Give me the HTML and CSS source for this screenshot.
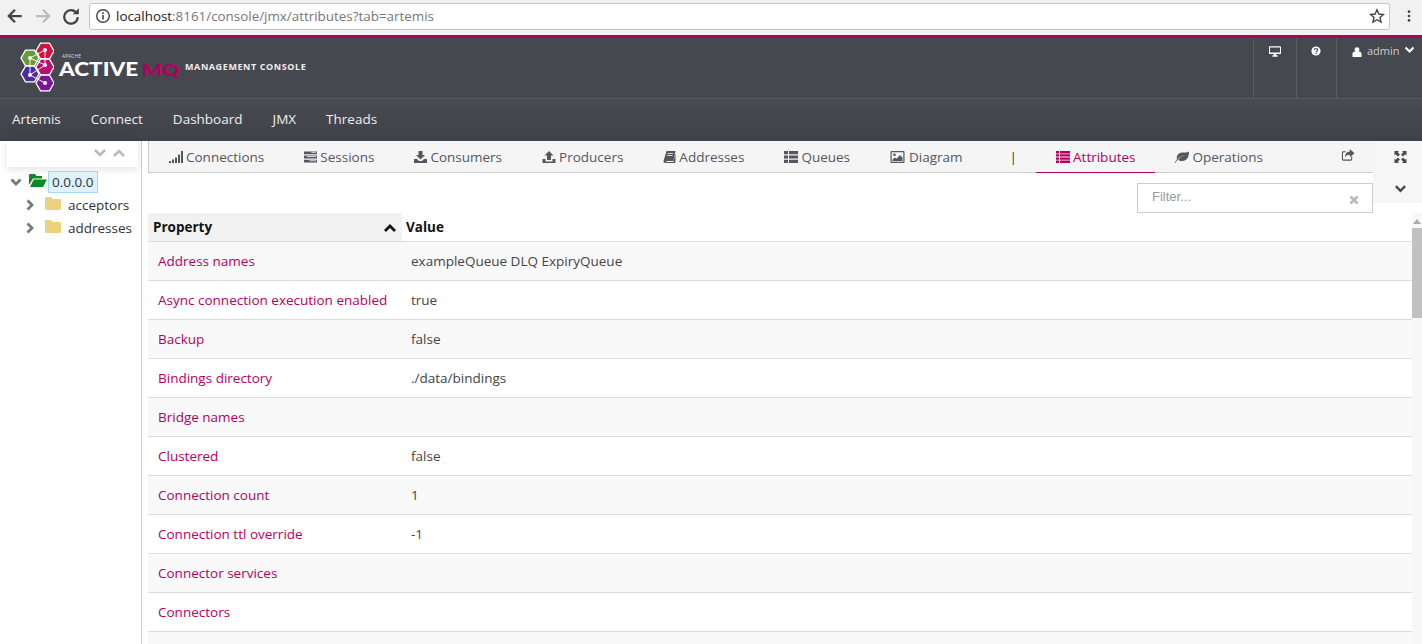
FILE: index.html
```html
<!DOCTYPE html>
<html lang="en">
<head>
    <meta charset="UTF-8">
    <meta name="viewport" content="width=device-width, initial-scale=1.0">
    <title>ActiveMQ Management Console</title>
    <link rel="stylesheet" href="styles.css">
</head>
<body>
    <div class="chrome">
        <svg class="chrome-btn" viewBox="0 0 16 16"><path d="M14 8H3M8 2.500 2.500 8 8 13.500" fill="none" stroke="#444" stroke-width="2"/></svg>
        <svg class="chrome-btn" viewBox="0 0 16 16"><path d="M2 8h11M8 2.500 13.500 8 8 13.500" fill="none" stroke="#bbb" stroke-width="2"/></svg>
        <svg class="chrome-btn" viewBox="0 0 16 16"><path d="M13 5.500A6 6 0 1 0 14 9" fill="none" stroke="#444" stroke-width="2"/><path d="M9.500 6.500H15V1z" fill="#444"/></svg>
        <div class="omnibox">
            <svg class="info" viewBox="0 0 16 16"><circle cx="8" cy="8" r="6.300" fill="none" stroke="#444" stroke-width="1.400"/><path d="M7.200 7h1.600v4.600H7.200zM7.200 4.300h1.600v1.600H7.200z" fill="#444"/></svg>
            <span class="url"><b>localhost</b>:8161/console/jmx/attributes?tab=artemis</span>
            <svg class="star" viewBox="0 0 16 16"><path d="M8 1.800l1.900 4.200 4.500.5-3.400 3 1 4.500L8 11.700 4 14l1-4.500-3.400-3 4.500-.5z" fill="none" stroke="#444" stroke-width="1.400"/></svg>
        </div>
        <svg class="dots" viewBox="0 0 4 16"><circle cx="2" cy="3" r="1.500"/><circle cx="2" cy="8" r="1.500"/><circle cx="2" cy="13" r="1.500"/></svg>
    </div>

    <header class="masthead">
        <div class="brand">
            <svg class="brand-hex" viewBox="0 0 34 50">
                <defs><path id="hex" d="M-4.500-7.800H4.500L9 0 4.500 7.800H-4.500L-9 0z" stroke="#fff" stroke-width="1.300"/></defs>
                <use href="#hex" x="10" y="16" fill="#6a9a37"/>
                <use href="#hex" x="10" y="32" fill="#4f2ba0"/>
                <use href="#hex" x="25" y="9" fill="#d4103f"/>
                <use href="#hex" x="25" y="25" fill="#b80f72"/>
                <use href="#hex" x="25" y="41" fill="#7a1498"/>
                <path d="M25 8 25 23 10 16 25 8M10 16 10 33 25 23M10 33 25 41" fill="none" stroke="#fff" stroke-width=".9"/>
                <g fill="#fff"><circle cx="25" cy="8" r="2"/><circle cx="10" cy="16" r="2"/><circle cx="25" cy="23" r="2"/><circle cx="10" cy="33" r="2"/><circle cx="25" cy="41" r="2"/></g>
            </svg>
            <div class="wordmark">
                <span class="apache">APACHE</span>
                <span class="active">ACTIVE<em>MQ</em></span>
            </div>
            <span class="console-title">MANAGEMENT CONSOLE</span>
        </div>
        <div class="top-tools">
            <div class="top-tool tool-desktop">
                <svg viewBox="0 0 14 12"><path fill-rule="evenodd" d="M1 0h12a1 1 0 0 1 1 1v7a1 1 0 0 1-1 1H8.500v1.500H10V12H4v-1.500h1.500V9H1a1 1 0 0 1-1-1V1a1 1 0 0 1 1-1zM1.200 1.200v6h11.600v-6z" fill="#fff"/></svg>
            </div>
            <div class="top-tool tool-help">
                <svg viewBox="0 0 12 12"><circle cx="6" cy="6" r="5.500" fill="#fff"/><path d="M4 4.700C4 3.500 5 3 6 3s2 .6 2 1.700C8 6 6.300 6 6.300 7.200" fill="none" stroke="#464850" stroke-width="1.400"/><rect x="5.400" y="8" width="1.600" height="1.500" fill="#464850"/></svg>
            </div>
            <div class="top-tool tool-user">
                <svg class="user-icon" viewBox="0 0 10 11"><circle cx="5" cy="3" r="2.700" fill="#fff"/><path d="M0 11V8c0-1.800 1.300-3 2.500-3h5C8.700 5 10 6.200 10 8v3z" fill="#fff"/></svg>
                <span>admin</span>
                <svg class="user-chev" viewBox="0 0 10 8"><path d="M1 1.500 5 5.500 9 1.500" fill="none" stroke="#fff" stroke-width="2.200"/></svg>
            </div>
        </div>
    </header>

    <nav class="mainnav">
        <a>Artemis</a>
        <a>Connect</a>
        <a>Dashboard</a>
        <a>JMX</a>
        <a>Threads</a>
    </nav>

    <div class="workspace">
        <aside class="tree">
            <div class="tree-tools">
                <svg viewBox="0 0 14 10"><path d="M2 2 7 7 12 2" fill="none" stroke="#bbb" stroke-width="2.600"/></svg>
                <svg viewBox="0 0 14 10"><path d="M2 8 7 3 12 8" fill="none" stroke="#bbb" stroke-width="2.600"/></svg>
            </div>
            <div class="tree-node tree-root">
                <svg class="tree-chev" viewBox="0 0 12 12"><path d="M1.500 3.500 6 8 10.500 3.500" fill="none" stroke="#6d7f6d" stroke-width="2.800"/></svg>
                <svg class="tree-open" viewBox="0 0 18 14"><path d="M0 12V2a1 1 0 0 1 1-1h5l1.500 2H13v2.500H4L0 12z" fill="#0a8a22"/><path d="M1 14 4.800 6.500H18L14 14z" fill="#0a8a22"/></svg>
                <span class="tree-label-on">0.0.0.0</span>
            </div>
            <div class="tree-node tree-child">
                <svg class="tree-chev" viewBox="0 0 12 12"><path d="M3.500 1.500 8 6 3.500 10.500" fill="none" stroke="#6d7f6d" stroke-width="2.800"/></svg>
                <svg class="tree-folder" viewBox="0 0 16 13"><path d="M1 0h5l1.500 2H15a1 1 0 0 1 1 1v9a1 1 0 0 1-1 1H1a1 1 0 0 1-1-1V1a1 1 0 0 1 1-1z" fill="#ecd27f"/></svg>
                <span>acceptors</span>
            </div>
            <div class="tree-node tree-child">
                <svg class="tree-chev" viewBox="0 0 12 12"><path d="M3.500 1.500 8 6 3.500 10.500" fill="none" stroke="#6d7f6d" stroke-width="2.800"/></svg>
                <svg class="tree-folder" viewBox="0 0 16 13"><path d="M1 0h5l1.500 2H15a1 1 0 0 1 1 1v9a1 1 0 0 1-1 1H1a1 1 0 0 1-1-1V1a1 1 0 0 1 1-1z" fill="#ecd27f"/></svg>
                <span>addresses</span>
            </div>
        </aside>

        <main class="content">
            <div class="content-top">
                <div class="content-head">
                    <ul class="tabs">
                        <li><svg viewBox="0 0 14 12"><path d="M0 10h2v2H0zM3 8.500h2V12H3zM6 6.500h2V12H6zM9 3.500h2V12H9zM12 0h2v12h-2z"/></svg>Connections</li>
                        <li><svg class="ico-narrow" viewBox="0 0 14 12"><path d="M0 0h14v3H0zM0 4.500h14v3H0zM0 9h14v3H0z"/><path d="M8 1h5M3 5.500h10M6 10h7" stroke="#fff" stroke-width=".8"/></svg>Sessions</li>
                        <li><svg class="ico-narrow" viewBox="0 0 13 12"><path d="M4.500 0h4v4h2.500L6.500 8.500 2 4h2.500zM0 8h3l2 2h3l2-2h3v4H0z"/></svg>Consumers</li>
                        <li><svg viewBox="0 0 13 12"><path d="M6.500 0 11 4.500H8.500V9h-4V4.500H2zM0 8h3v2.500h7V8h3v4H0z"/></svg>Producers</li>
                        <li><svg class="ico-narrow" viewBox="0 0 12 12"><path d="M3 0h9l-2 10H3a.8.8 0 0 0 0 1h7l2-9v8l-.500 2H2C.500 12 0 11 0 10z"/><path d="M4 2.500h5.500M3.500 4.500h5.500" stroke="#f5f5f5" stroke-width=".8"/></svg>Addresses</li>
                        <li><svg viewBox="0 0 14 12"><path d="M0 0h4v3.200H0zM5 0h9v3.200H5zM0 4.400h4v3.200H0zM5 4.400h9v3.200H5zM0 8.800h4V12H0zM5 8.800h9V12H5z"/></svg>Queues</li>
                        <li><svg class="ico-big" viewBox="0 0 14 12"><path fill-rule="evenodd" d="M1 0h12a1 1 0 0 1 1 1v10a1 1 0 0 1-1 1H1a1 1 0 0 1-1-1V1a1 1 0 0 1 1-1zm.2 1.200v9.600h11.600V1.200z"/><circle cx="4" cy="3.800" r="1.300"/><path d="M2 10V8.500l2.500-2 1.500 1.300L9.500 4 12 6.500V10z"/></svg>Diagram</li>
                        <li class="tab-sep">|</li>
                        <li class="tab-on"><svg viewBox="0 0 14 12"><path d="M0 0h3v2.400H0zM4 0h10v2.400H4zM0 3.200h3v2.400H0zM4 3.200h10v2.400H4zM0 6.400h3v2.400H0zM4 6.400h10v2.400H4zM0 9.600h3V12H0zM4 9.600h10V12H4z"/></svg>Attributes</li>
                        <li><svg viewBox="0 0 14 12"><path d="M14 .500C14 6 12 10 7 10c-1.500 0-3-.500-4-1.300C4.500 6.500 7 5 10 4.500 7 4.500 4 6 1.800 9.800L.500 12 0 11.200C.700 10 1.500 9 2 8 1 4 4 1.500 8 1.500c2.500 0 4.500 0 6-1z"/></svg>Operations</li>
                        <li class="tab-share"><svg viewBox="0 0 14 13"><path d="M9 0l5 4.500L9 9V6.300C6.500 6.300 4.500 7 4 9.500 3.500 5.500 5.500 3 9 2.800z"/><path d="M11 8v3a1 1 0 0 1-1 1H2a1 1 0 0 1-1-1V4a1 1 0 0 1 1-1h2.500" fill="none" stroke="#555760" stroke-width="1.200"/></svg></li>
                    </ul>
                    <div class="filter-row">
                        <div class="filter">
                            <span>Filter...</span>
                            <svg viewBox="0 0 10 10"><path d="M1.500 1.500 8.500 8.500M8.500 1.500 1.500 8.500" stroke="#bbb" stroke-width="2.800"/></svg>
                        </div>
                    </div>
                </div>
                <div class="side-tools">
                    <svg viewBox="0 0 12 12"><path d="M0 0h4.500L3.200 1.300 5.400 3.500 3.500 5.400 1.300 3.200 0 4.500zM12 0v4.500L10.700 3.200 8.500 5.400 6.600 3.500 8.800 1.300 7.500 0zM0 12V7.500l1.300 1.300 2.200-2.200 1.900 1.900-2.200 2.200L4.500 12zM12 12H7.500l1.300-1.300-2.200-2.200 1.900-1.900 2.200 2.200L12 7.500z" fill="#464850"/></svg>
                    <svg viewBox="0 0 14 10"><path d="M2 2 7 7 12 2" fill="none" stroke="#464850" stroke-width="2.600"/></svg>
                </div>
            </div>

            <div class="table-wrap">
                <table class="attrs">
                    <thead>
                        <tr>
                            <th class="col-prop">Property<svg viewBox="0 0 14 10"><path d="M2 8 7 3 12 8" fill="none" stroke="#111" stroke-width="2.800"/></svg></th>
                            <th class="col-val">Value</th>
                        </tr>
                    </thead>
                    <tbody>
                        <tr><td>Address names</td><td>exampleQueue DLQ ExpiryQueue</td></tr>
                        <tr><td>Async connection execution enabled</td><td>true</td></tr>
                        <tr><td>Backup</td><td>false</td></tr>
                        <tr><td>Bindings directory</td><td>./data/bindings</td></tr>
                        <tr><td>Bridge names</td><td></td></tr>
                        <tr><td>Clustered</td><td>false</td></tr>
                        <tr><td>Connection count</td><td>1</td></tr>
                        <tr><td>Connection ttl override</td><td>-1</td></tr>
                        <tr><td>Connector services</td><td></td></tr>
                        <tr><td>Connectors</td><td></td></tr>
                        <tr><td></td><td></td></tr>
                    </tbody>
                </table>
                <div class="scrollbar">
                    <i class="scroll-up"></i>
                    <div class="scroll-thumb"></div>
                </div>
            </div>
        </main>
    </div>
</body>
</html>
```

FILE: styles.css
```css
html, body {
    height: 100%;
    margin: 0;
}
body {
    overflow: hidden;
    font-family: "Open Sans", sans-serif;
    font-size: 13.5px;
    color: #333;
    background: #fff;
}

/* browser bar */
.chrome {
    height: 35px;
    display: flex;
    align-items: center;
    background: #f1f1f1;
    box-sizing: border-box;
    padding: 0 0 3px 6px;
}
.chrome-btn {
    width: 18px;
    height: 18px;
    margin-right: 10px;
}
.omnibox {
    flex: 1;
    height: 27px;
    margin-left: -1px;
    display: flex;
    align-items: center;
    box-sizing: border-box;
    padding: 0 4px 0 5px;
    background: #fff;
    border: 1px solid #c6c6c6;
    border-radius: 3px;
}
.info {
    width: 16px;
    height: 16px;
}
.url {
    flex: 1;
    margin-left: 5px;
    font-size: 13.4px;
    color: #777;
}
.url b {
    font-weight: 400;
    color: #222;
}
.star {
    width: 16px;
    height: 16px;
}
.dots {
    width: 4px;
    height: 14px;
    margin: 0 11px 0 17px;
    fill: #444;
}

/* masthead */
.masthead {
    height: 60px;
    display: flex;
    justify-content: space-between;
    background: #46484f;
    border-top: 3px solid #b0004f;
    border-bottom: 1px solid #55575d;
}
.brand {
    display: flex;
    align-items: center;
    padding: 0 0 2px 20px;
}
.brand-hex {
    width: 34px;
    height: 50px;
}
.wordmark {
    display: flex;
    flex-direction: column;
    width: 120px;
    margin-left: 5px;
    margin-top: -3px;
}
.apache {
    font-size: 5px;
    line-height: 6px;
    margin: 0 0 1px 3px;
    color: #ddd;
}
.active {
    font-family: "Lato", sans-serif;
    font-weight: 900;
    font-size: 18px;
    line-height: 18px;
    white-space: nowrap;
    color: #fff;
    transform: scaleX(1.25);
    transform-origin: left;
}
.active em {
    font-style: normal;
    font-size: 17px;
    margin-left: 3px;
    color: #b0005f;
}
.console-title {
    margin: 0 0 2px 6px;
    font-size: 9px;
    font-weight: 700;
    letter-spacing: .6px;
    color: #eee;
}
.top-tools {
    display: flex;
}
.top-tool {
    display: flex;
    align-items: flex-start;
    justify-content: center;
    box-sizing: border-box;
    padding-top: 8px;
    border-left: 1px solid #5a5c62;
    color: #ccc;
    font-size: 11px;
}
.tool-desktop {
    width: 43px;
}
.tool-desktop svg {
    width: 12px;
    height: 11px;
}
.tool-help {
    width: 40px;
    padding-right: 2px;
}
.tool-help svg {
    width: 10px;
    height: 10px;
}
.tool-user {
    width: 86px;
    justify-content: flex-start;
    padding: 6px 0 0 15px;
    line-height: 13px;
}
.user-icon {
    width: 10px;
    height: 10px;
    margin: 3px 5px 0 0;
}
.user-chev {
    width: 11px;
    height: 8px;
    margin: 2px 0 0 4px;
}

/* main nav */
.mainnav {
    height: 42px;
    box-sizing: border-box;
    padding: 0 0 2px 12px;
    display: flex;
    align-items: center;
    gap: 30px;
    background: linear-gradient(#494b51, #3f4148);
    color: #eee;
}

/* left tree */
.workspace {
    display: flex;
    height: 503px;
}
.tree {
    width: 141px;
    flex: none;
    border-right: 1px solid #ccc;
    color: #333;
}
.tree-tools {
    width: 131px;
    height: 26px;
    margin: 0 0 3px 7px;
    box-sizing: border-box;
    display: flex;
    justify-content: flex-end;
    align-items: center;
    gap: 5px;
    padding: 0 12px 2px 0;
    background: #fff;
    box-shadow: 0 2px 8px rgba(0,0,0,.12);
}
.tree-tools svg {
    width: 14px;
    height: 10px;
}
.tree-node {
    display: flex;
    align-items: center;
    height: 23px;
}
.tree-root {
    padding-left: 10px;
}
.tree-chev {
    width: 12px;
    height: 12px;
    flex: none;
}
.tree-open {
    width: 18px;
    height: 14px;
    margin: -3px 1px 0 7px;
}
.tree-label-on {
    padding: 0 3px;
    line-height: 20px;
    background: #dff2fd;
    border: 1px solid #a3d7f5;
}
.tree-child {
    padding-left: 24px;
}
.tree-folder {
    width: 16px;
    height: 13px;
    margin: -2px 7px 0 9px;
    flex: none;
}

/* content */
.content {
    flex: 1;
    margin-left: 6px;
    min-width: 0;
}
.content-top {
    display: flex;
    height: 72px;
}
.content-head {
    flex: 1;
    min-width: 0;
}
.tabs {
    list-style: none;
    margin: 0;
    padding: 0;
    height: 32px;
    box-sizing: border-box;
    display: flex;
    background: #f5f5f5;
    border-left: 1px solid #ccc;
    border-bottom: 1px solid #ccc;
    color: #555760;
}
.tabs li {
    display: flex;
    align-items: center;
    padding: 0 20px;
    height: 32px;
    box-sizing: border-box;
    white-space: nowrap;
}
.tabs svg {
    width: 14px;
    height: 12px;
    margin-right: 3px;
    fill: #555760;
}
.tabs svg.ico-narrow {
    width: 13px;
}
.tabs svg.ico-big {
    width: 15px;
    margin-right: 4px;
}
.tabs .tab-sep {
    padding: 0 19px 0 27px;
    color: #333;
}
.tabs .tab-on {
    color: #b5005f;
    border-bottom: 1px solid #b5005f;
}
.tabs .tab-on svg {
    fill: #b5005f;
}
.tabs .tab-share {
    margin-left: auto;
    padding: 0 15px 5px 0;
}
.filter-row {
    display: flex;
    justify-content: flex-end;
    padding-top: 10px;
}
.filter {
    width: 236px;
    height: 30px;
    box-sizing: border-box;
    display: flex;
    justify-content: space-between;
    padding: 5px 13px 0 14px;
    border: 1px solid #ccc;
    font-family: "Liberation Sans", sans-serif;
    font-size: 13px;
    color: #999;
}
.filter svg {
    width: 10px;
    height: 10px;
    margin-top: 6px;
}
.side-tools {
    width: 49px;
    height: 62px;
    flex: none;
    display: flex;
    flex-direction: column;
    align-items: center;
    gap: 21px;
    box-sizing: border-box;
    padding: 10px 0 0 5px;
    background: #f6f6f6;
}
.side-tools svg {
    width: 13px;
    height: 12px;
}
.side-tools svg + svg {
    height: 10px;
}

/* attribute table */
.table-wrap {
    display: flex;
    height: 431px;
    overflow: hidden;
}
.attrs {
    flex: 1;
    align-self: flex-start;
    border-collapse: collapse;
    table-layout: fixed;
}
.attrs th {
    height: 28px;
    padding: 0 5px;
    text-align: left;
    font-size: 13.5px;
    font-weight: 700;
    color: #111;
    border-bottom: 1px solid #ddd;
}
.col-prop {
    width: 244px;
    background: #f1f1f1;
}
.col-prop svg {
    float: right;
    width: 14px;
    height: 10px;
    margin-top: 5px;
}
.attrs th.col-val {
    padding-left: 4px;
}
.attrs td {
    height: 38px;
    padding: 0 9px;
    border-bottom: 1px solid #ddd;
    color: #444;
}
.attrs td:first-child {
    padding-left: 10px;
    color: #b5005f;
}
.attrs tbody tr:nth-child(odd) {
    background: #f9f9f9;
}
.scrollbar {
    width: 10px;
    flex: none;
    background: #f7f7f7;
}
.scroll-up {
    display: block;
    width: 0;
    height: 0;
    margin: 6px auto 4px;
    border: 4px solid transparent;
    border-top: 0;
    border-bottom: 5px solid #aaa;
}
.scroll-thumb {
    height: 90px;
    background: #c1c1c1;
}
```
